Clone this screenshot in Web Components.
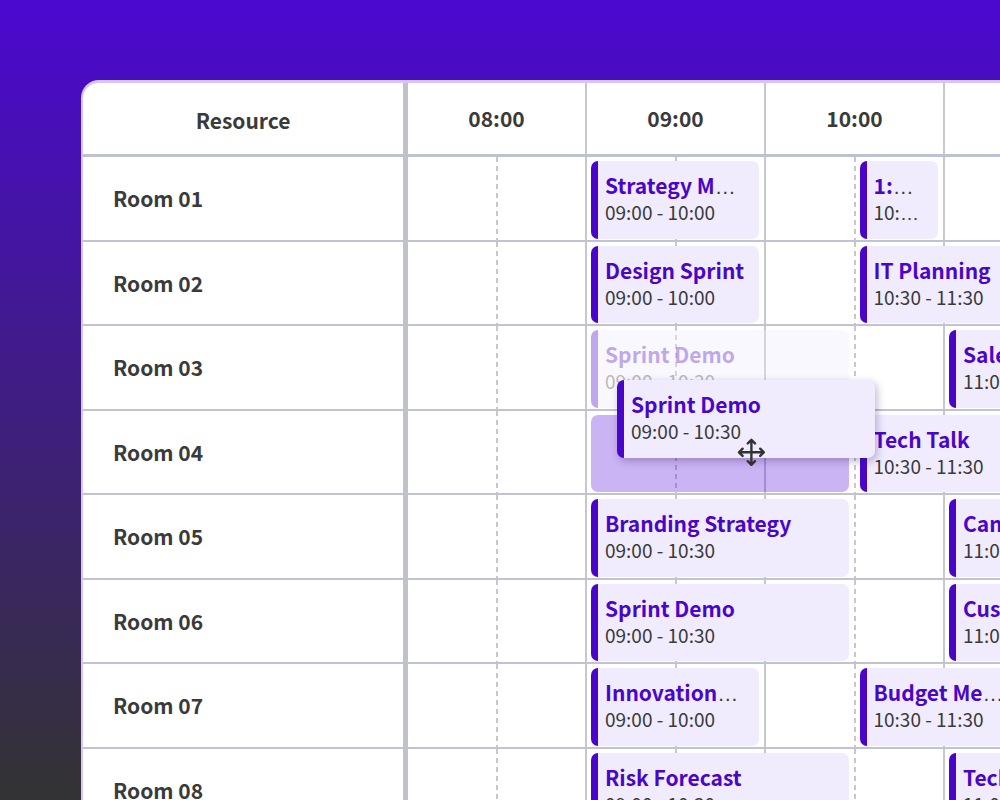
<!DOCTYPE html>
<html lang="en">
<head>
<meta charset="UTF-8">
<meta name="viewport" content="width=device-width, initial-scale=1">
<title>Room schedule</title>
<style>
  :root {
    --accent: #4a06c8;
    --accent-soft: #f0ecfe;
    --text: #3a3a3a;
    --grid-line: #c6c8ce;
    --row-line: #c1c3d0;
    --slot: 179px;
    --hours: 5;
    --resource: 325px;
    --font: "Noto Sans CJK KR", "Noto Sans", sans-serif;
  }

  body {
    margin: 0;
    height: 100vh;
    overflow: hidden;
    box-sizing: border-box;
    padding: 80px 0 0 81px;
    background: linear-gradient(#4b08d0, #333333);
    color: var(--text);
    font-family: var(--font);
  }
</style>
</head>
<body>
<schedule-board>
  <schedule-row name="Room 01">
    <schedule-event start="3" span="2" name="Strategy Meeting" time="09:00 - 10:00"></schedule-event>
    <schedule-event start="6" span="1" name="1:1 Meeting" time="10:30 - 11:00"></schedule-event>
  </schedule-row>
  <schedule-row name="Room 02">
    <schedule-event start="3" span="2" name="Design Sprint" time="09:00 - 10:00"></schedule-event>
    <schedule-event start="6" span="2" name="IT Planning" time="10:30 - 11:30"></schedule-event>
  </schedule-row>
  <schedule-row name="Room 03">
    <schedule-event ghost start="3" span="3" name="Sprint Demo" time="09:00 - 10:30"></schedule-event>
    <schedule-event start="7" span="3" name="Sales Review" time="11:00 - 12:30"></schedule-event>
  </schedule-row>
  <schedule-row name="Room 04">
    <drop-target start="3" span="3"></drop-target>
    <schedule-event start="6" span="2" name="Tech Talk" time="10:30 - 11:30"></schedule-event>
  </schedule-row>
  <schedule-row name="Room 05">
    <schedule-event start="3" span="3" name="Branding Strategy" time="09:00 - 10:30"></schedule-event>
    <schedule-event start="7" span="3" name="Campaign Plan" time="11:00 - 12:30"></schedule-event>
  </schedule-row>
  <schedule-row name="Room 06">
    <schedule-event start="3" span="3" name="Sprint Demo" time="09:00 - 10:30"></schedule-event>
    <schedule-event start="7" span="3" name="Customer Sync" time="11:00 - 12:30"></schedule-event>
  </schedule-row>
  <schedule-row name="Room 07">
    <schedule-event start="3" span="2" name="Innovations Day" time="09:00 - 10:00"></schedule-event>
    <schedule-event start="6" span="2" name="Budget Meeting" time="10:30 - 11:30"></schedule-event>
  </schedule-row>
  <schedule-row name="Room 08">
    <schedule-event start="3" span="3" name="Risk Forecast" time="09:00 - 10:30"></schedule-event>
    <schedule-event start="7" span="3" name="Tech Review" time="11:00 - 12:30"></schedule-event>
  </schedule-row>
  <schedule-event slot="dragged" dragging name="Sprint Demo" time="09:00 - 10:30"></schedule-event>
  <move-cursor slot="dragged"></move-cursor>
</schedule-board>

<script>
class ScheduleBoard extends HTMLElement {
  constructor() {
    super();
    this.attachShadow({ mode: "open" });
  }

  connectedCallback() {
    this.setAttribute("role", "grid");
    this.render();
  }

  render() {
    const hours = ["08:00", "09:00", "10:00", "11:00", "12:00"];
    this.shadowRoot.innerHTML = `
      <style>
        :host {
          display: block;
          overflow: hidden;
          background: #ffffff;
          border-top: 3px solid #d5c5f9;
          border-left: 2px solid #d5c5f9;
          border-top-left-radius: 18px;
        }

        .head {
          display: flex;
          height: 71px;
          border-bottom: 3px solid #bdc2d2;
          font-size: 21px;
          font-weight: 700;
          line-height: 28px;
        }

        .resource, .hour {
          flex: none;
          box-sizing: border-box;
          display: flex;
          align-items: center;
          justify-content: center;
        }

        .resource {
          width: var(--resource);
          margin-bottom: -3px;
          border-right: 5px solid #bfc2c9;
        }

        .hour {
          width: var(--slot);
          padding-bottom: 2px;
          border-right: 2px solid var(--grid-line);
        }

        .rows {
          position: relative;
          display: grid;
          grid-template-rows: repeat(8, 1fr);
          height: 676px;
        }

        .layer {
          position: absolute;
          inset: 0 0 0 var(--resource);
          pointer-events: none;
        }
      </style>

      <div class="head" role="row">
        <div class="resource" role="columnheader">Resource</div>
        ${hours.map((h) => `<div class="hour" role="columnheader">${h}</div>`).join("")}
      </div>
      <div class="rows">
        <slot></slot>
        <div class="layer"><slot name="dragged"></slot></div>
      </div>
    `;
  }
}

class ScheduleRow extends HTMLElement {
  constructor() {
    super();
    this.attachShadow({ mode: "open" });
  }

  connectedCallback() {
    this.setAttribute("role", "row");
    this.render();
  }

  render() {
    this.shadowRoot.innerHTML = `
      <style>
        :host {
          display: flex;
          min-height: 0;
        }

        .name, .lane {
          flex: none;
          box-sizing: border-box;
          border-bottom: 2px solid var(--row-line);
        }

        .name {
          width: calc(var(--resource) - 5px);
          display: flex;
          align-items: center;
          padding-left: 30px;
          font-size: 21px;
          font-weight: 700;
          line-height: 28px;
        }

        .divider {
          flex: none;
          width: 5px;
          background: #bfc2c9;
        }

        .lane {
          width: calc(var(--slot) * var(--hours));
          display: grid;
          grid-template-columns: repeat(10, 1fr);
          grid-template-rows: 1fr;
          /* full hours are solid lines on the right of each slot */
          background: repeating-linear-gradient(90deg, transparent 0 calc(var(--slot) - 2px), var(--grid-line) calc(var(--slot) - 2px) var(--slot));
        }

        .halves {
          grid-area: 1 / 1 / 2 / -1;
          display: flex;
        }

        /* half hours are dashed */
        .halves i {
          flex: 1;
          background: repeating-linear-gradient(#c8c8cc 0 5px, transparent 5px 9px) 88px 0 / 2px 100% no-repeat;
        }

        ::slotted(*) {
          grid-row: 1;
        }
      </style>

      <div class="name" role="rowheader">${this.getAttribute("name")}</div>
      <div class="divider"></div>
      <div class="lane" role="gridcell">
        <div class="halves"><i></i><i></i><i></i><i></i><i></i></div>
        <slot></slot>
      </div>
    `;
  }
}

class ScheduleEvent extends HTMLElement {
  constructor() {
    super();
    this.attachShadow({ mode: "open" });
  }

  connectedCallback() {
    if (this.hasAttribute("start")) {
      this.style.gridColumn = `${this.getAttribute("start")} / span ${this.getAttribute("span")}`;
    }
    this.render();
  }

  render() {
    this.shadowRoot.innerHTML = `
      <style>
        :host {
          display: block;
          box-sizing: border-box;
          min-width: 0;
          overflow: hidden;
          margin: 4px 7px 1px 4px;
          padding: 12px 13px 0 7px;
          border-left: 7px solid var(--accent);
          border-radius: 7px;
          background: var(--accent-soft);
        }

        :host([ghost]) {
          opacity: 0.35;
        }

        :host([dragging]) {
          position: absolute;
          left: 209px;
          top: 223px;
          width: 258px;
          height: 78px;
          margin: 0;
          box-shadow: 2px 3px 8px rgba(40, 20, 90, 0.3);
        }

        /* the line's own font draws the ellipsis, low on the baseline */
        div {
          overflow: hidden;
          white-space: nowrap;
          text-overflow: ellipsis;
          font-family: "Liberation Sans", sans-serif;
        }

        b, span {
          font-family: var(--font);
          line-height: 1;
        }

        .title {
          font-size: 21px;
          line-height: 28px;
        }

        .title b {
          color: var(--accent);
          font-weight: 700;
        }

        .time {
          font-size: 19px;
          line-height: 26px;
        }
      </style>

      <div class="title"><b>${this.getAttribute("name")}</b></div>
      <div class="time"><span>${this.getAttribute("time")}</span></div>
    `;
  }
}

class DropTarget extends HTMLElement {
  constructor() {
    super();
    this.attachShadow({ mode: "open" });
  }

  connectedCallback() {
    this.style.gridColumn = `${this.getAttribute("start")} / span ${this.getAttribute("span")}`;
    this.shadowRoot.innerHTML = `
      <style>
        :host {
          display: block;
          margin: 4px 7px 1px 4px;
          border-radius: 7px;
          background: rgba(82, 6, 220, 0.3);
        }
      </style>
    `;
  }
}

class MoveCursor extends HTMLElement {
  constructor() {
    super();
    this.attachShadow({ mode: "open" });
  }

  connectedCallback() {
    this.shadowRoot.innerHTML = `
      <style>
        :host {
          display: block;
          position: absolute;
          left: 329px;
          top: 281px;
        }

        svg {
          display: block;
        }
      </style>

      <svg width="28" height="28" viewBox="0 0 28 28" fill="none" stroke="#333" stroke-width="2.4" stroke-linecap="round" stroke-linejoin="round" aria-hidden="true">
        <path d="M14.4 2v24.6M2.2 14.3h24.6M10.8 5.4l3.6-3.6L18 5.4M10.8 23.2l3.6 3.6 3.6-3.6M5.6 10.7L2 14.3l3.6 3.6M23.2 10.7l3.6 3.6-3.6 3.6"/>
      </svg>
    `;
  }
}

customElements.define("schedule-board", ScheduleBoard);
customElements.define("schedule-row", ScheduleRow);
customElements.define("schedule-event", ScheduleEvent);
customElements.define("drop-target", DropTarget);
customElements.define("move-cursor", MoveCursor);
</script>
</body>
</html>
